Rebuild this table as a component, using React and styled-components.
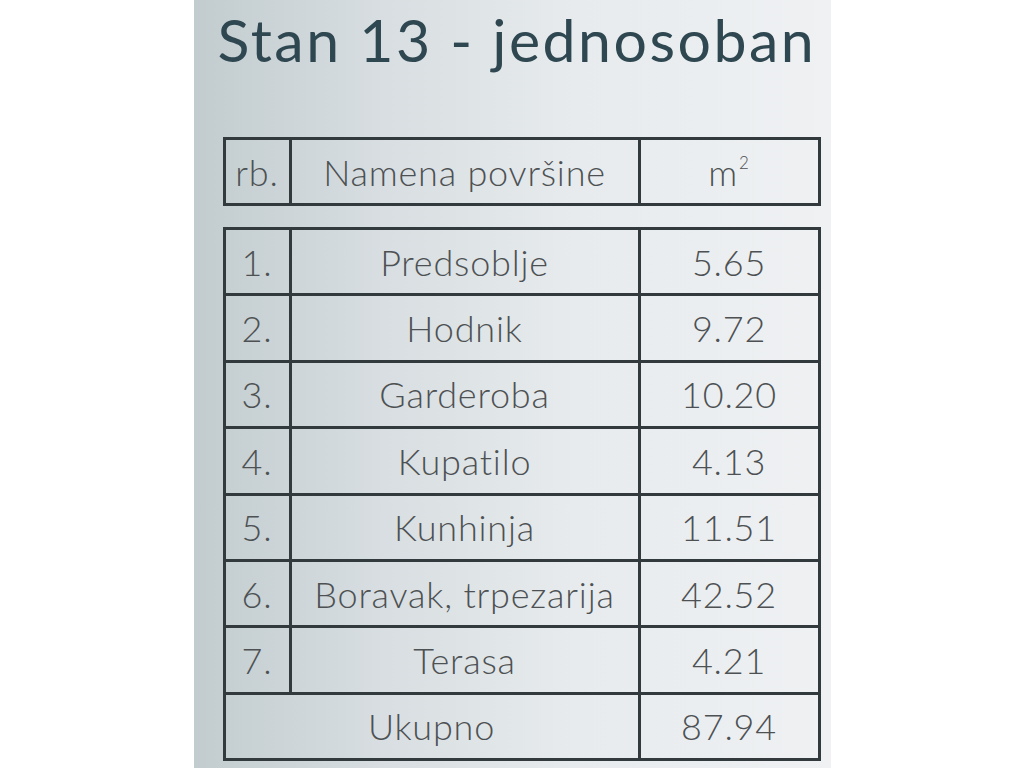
import React from 'react'
import styled, { createGlobalStyle } from 'styled-components'

const GlobalStyle = createGlobalStyle`
  html, body {
    margin: 0;
    padding: 0;
    background: #ffffff;
  }
`

const rows = [
    { rb: '1.', name: 'Predsoblje', area: '5.65' },
    { rb: '2.', name: 'Hodnik', area: '9.72' },
    { rb: '3.', name: 'Garderoba', area: '10.20' },
    { rb: '4.', name: 'Kupatilo', area: '4.13' },
    { rb: '5.', name: 'Kunhinja', area: '11.51' },
    { rb: '6.', name: 'Boravak, trpezarija', area: '42.52' },
    { rb: '7.', name: 'Terasa', area: '4.21' },
]

export default function App() {
    return (
        <>
            <GlobalStyle />
            <Panel>
                <Title>Stan 13 - jednosoban</Title>
                <Grid rowHeight={66} top={66}>
                    <Cell>rb.</Cell>
                    <Cell>Namena površine</Cell>
                    <Cell><span>m<Sup>2</Sup></span></Cell>
                </Grid>
                <Grid rowHeight={66.4} top={21}>
                    {rows.map(r => (
                        <React.Fragment key={r.rb}>
                            <Cell>{r.rb}</Cell>
                            <Cell>{r.name}</Cell>
                            <Cell>{r.area}</Cell>
                        </React.Fragment>
                    ))}
                    <Cell span={2}>Ukupno</Cell>
                    <Cell>87.94</Cell>
                </Grid>
            </Panel>
        </>
    )
}

const Panel = styled.div`
width: 637px;
height: 768px;
margin: 0 auto;
box-sizing: border-box;
padding: 0 10px 0 29px;
background: linear-gradient(to right, #c2cccf 0%, #d8dee1 30%, #e7ebed 60%, #eff1f3 100%);
display: flex;
flex-direction: column;
`

const Title = styled.h1`
margin: 9px 0 0 -5px;
height: 62px;
font-family: "Lato", "Liberation Sans", sans-serif;
font-weight: 400;
font-size: 59px;
line-height: 62px;
letter-spacing: 2.5px;
color: #2e4750;
white-space: nowrap;
`

const Grid = styled.div`
display: grid;
grid-template-columns: 66px 349px 180px;
grid-auto-rows: ${p => p.rowHeight}px;
margin-top: ${p => p.top}px;
width: 598px;
border-top: 3px solid #333a3d;
border-left: 3px solid #333a3d;
box-sizing: border-box;
`

const Cell = styled.div`
grid-column: span ${p => p.span || 1};
display: flex;
align-items: center;
justify-content: center;
box-sizing: border-box;
border-right: 3px solid #333a3d;
border-bottom: 3px solid #333a3d;
font-family: "Lato", "Liberation Sans", sans-serif;
font-weight: 300;
font-size: 36px;
letter-spacing: 0.8px;
color: #4d5153;
`

const Sup = styled.sup`
font-size: 17px;
vertical-align: top;
position: relative;
top: 2px;
margin-left: 1px;
`
